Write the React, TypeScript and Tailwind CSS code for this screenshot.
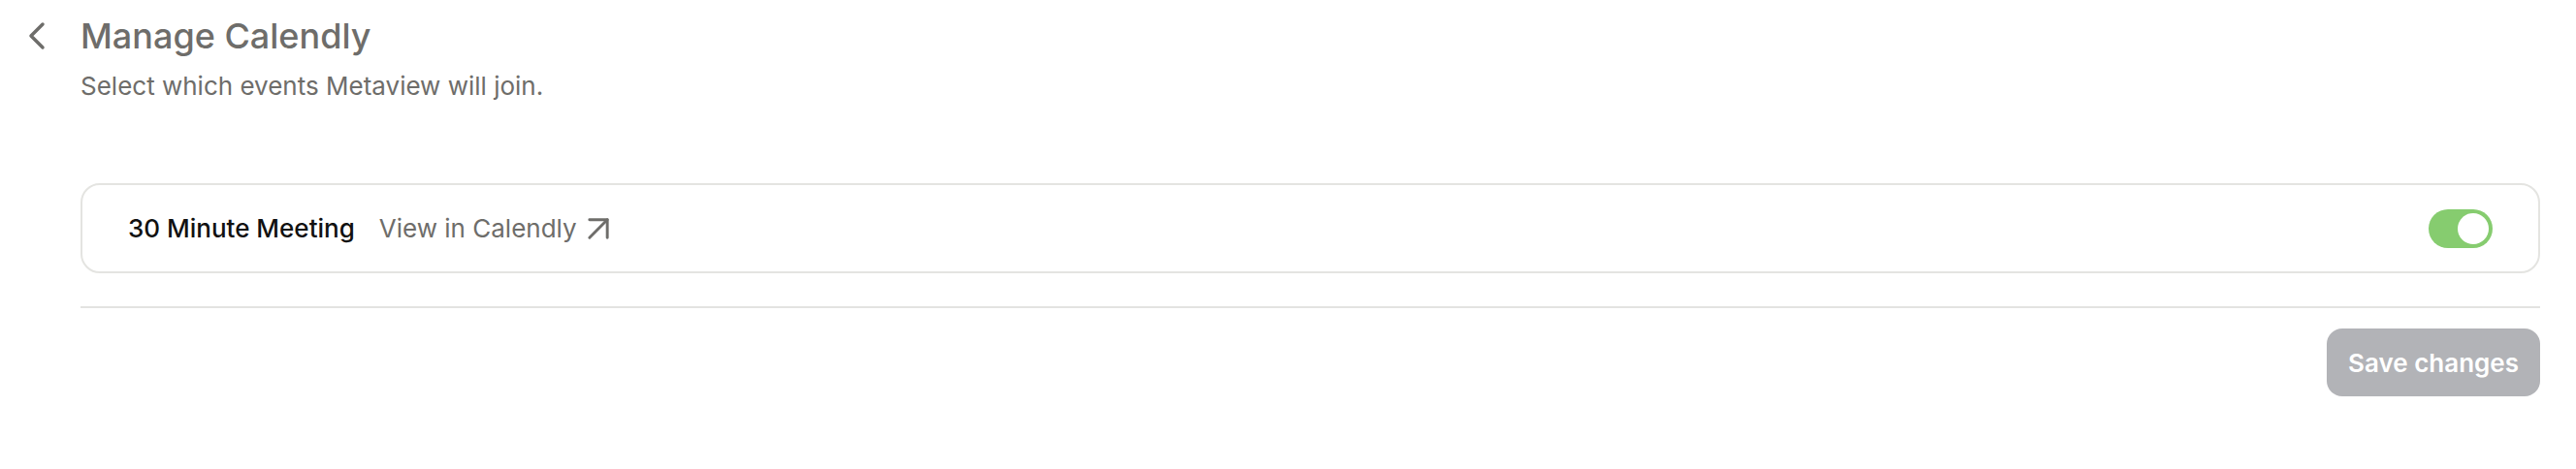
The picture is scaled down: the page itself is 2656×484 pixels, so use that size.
import React, { useState } from 'react';
import { ChevronLeft, ArrowUpRight } from 'lucide-react';

export default function App() {
  const [enabled, setEnabled] = useState(true);

  return (
    <div className="min-h-screen w-full bg-white font-['Inter',sans-serif] antialiased">
      <div className="flex pt-[15px] pr-[37px]">
        {/* Back */}
        <div className="w-[83px] flex justify-center pr-[7px]">
          <button className="h-[44px] flex items-center text-[#6e6d6a]">
            <ChevronLeft className="w-[48px] h-[48px]" strokeWidth={1.75} />
          </button>
        </div>

        <div className="flex-1 flex flex-col">
          {/* Header */}
          <h1 className="text-[36px] leading-[44px] font-medium text-[#6e6d6a]">Manage Calendly</h1>
          <p className="mt-[10px] text-[26px] leading-[40px] text-[#6e6d6a]">
            Select which events Metaview will join.
          </p>

          {/* Event card */}
          <div className="mt-[80px] h-[93px] flex items-center justify-between border-2 border-[#e4e4e1] rounded-[20px] px-[47px]">
            <div className="flex items-center gap-[25px]">
              <span className="text-[26px] font-medium text-[#111111]">30 Minute Meeting</span>
              <a className="flex items-center text-[26px] text-[#6e6d6a]">
                View in Calendly
                <ArrowUpRight className="w-[44px] h-[44px]" strokeWidth={1.6} />
              </a>
            </div>
            <button
              onClick={() => setEnabled(!enabled)}
              className={`w-[66px] h-[40px] rounded-full flex items-center p-[4px] ${enabled ? 'bg-[#86cc6f] justify-end' : 'bg-[#d4d4d2] justify-start'}`}
            >
              <span className="w-[32px] h-[32px] rounded-full bg-white" />
            </button>
          </div>

          <div className="mt-[34px] h-[2px] bg-[#e3e3e1]" />

          <div className="mt-[21px] flex justify-end">
            <button className="h-[70px] w-[220px] rounded-[16px] bg-[#b2b3b7] text-white text-[26px] font-semibold">
              Save changes
            </button>
          </div>
        </div>
      </div>
    </div>
  );
}
